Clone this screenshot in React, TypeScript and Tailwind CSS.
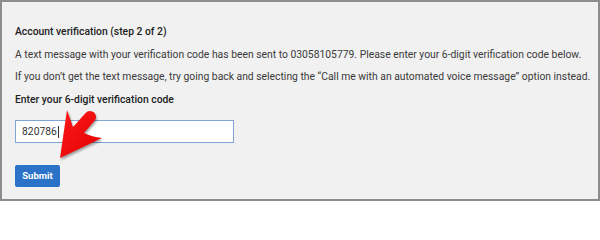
import React from 'react';

export default function App() {
  return (
    <div className="relative w-[600px] h-[201px] overflow-hidden" style={{ fontFamily: 'Roboto, "Liberation Sans", sans-serif' }}>
      {/* Verification card */}
      <div className="w-full h-full border-2 border-[#8d8d8d] bg-[#f1f1f1] pl-[13px] pt-[19px] text-[10.35px] text-[#3a3a3a]">
        <div className="leading-[22.5px] font-medium text-[#222]">Account verification (step 2 of 2)</div>
        <div className="leading-[22.5px] whitespace-nowrap">
          A text message with your verification code has been sent to 03058105779. Please enter your 6-digit verification code below.
        </div>
        <div className="leading-[22.5px] whitespace-nowrap">
          If you don’t get the text message, try going back and selecting the “Call me with an automated voice message” option instead.
        </div>
        <div className="leading-[22.5px] font-medium text-[#222]">Enter your 6-digit verification code</div>

        <div className="mt-[9px] w-[219px] h-[23px] border border-[#7ea5d6] bg-white flex items-center pl-[6px] text-[#333]">
          820786<span className="inline-block w-px h-[12px] bg-[#333] ml-px" />
        </div>

        <button className="mt-[22px] w-[45px] h-[22px] rounded-[2px] bg-[#2b72c9] text-white text-[9.5px] font-bold flex items-center justify-center">
          Submit
        </button>
      </div>

      {/* Red annotation arrow */}
      <svg className="absolute left-0 top-0 drop-shadow-[1px_2px_1px_rgba(0,0,0,0.35)]" width="600" height="201" viewBox="0 0 600 201">
        <defs>
          <linearGradient id="arrowRed" x1="0" y1="0" x2="1" y2="1">
            <stop offset="0" stopColor="#ff1a1a" />
            <stop offset="1" stopColor="#e00000" />
          </linearGradient>
        </defs>
        <path
          d="M60,158 L67,110 L73,127 L85.6,112.9 A6 6 0 0 1 94.4,121.1 L84,133 Q92,137 102,138 Z"
          fill="url(#arrowRed)"
        />
      </svg>
    </div>
  );
}
